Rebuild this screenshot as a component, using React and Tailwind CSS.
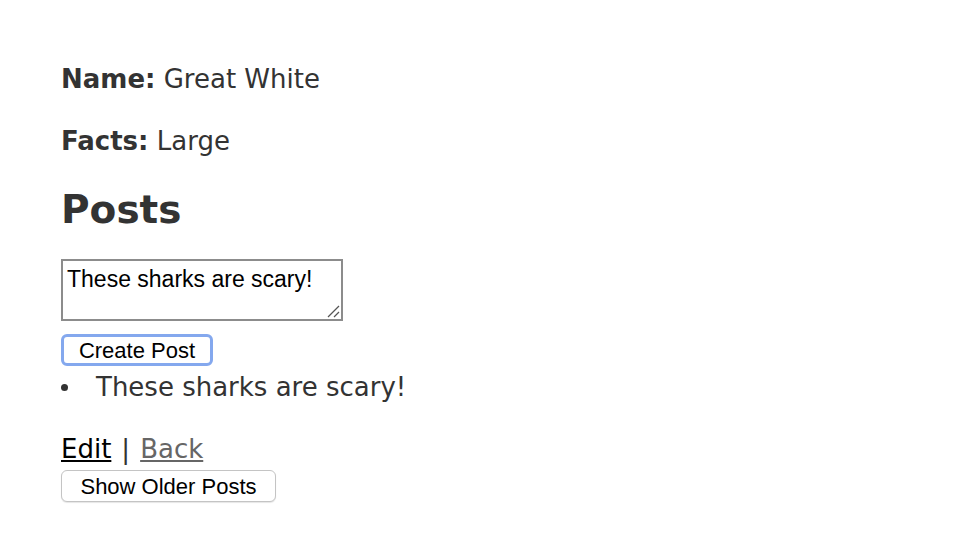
export default function App() {
  const body = { fontFamily: '"DejaVu Sans", Verdana, sans-serif' };
  const sys = { fontFamily: '"Liberation Sans", Arial, sans-serif' };
  return (
    <div className="min-h-[536px] w-[970px] bg-white pl-[61px] pt-[64px] text-[#333]" style={body}>
      <p className="text-[26px] leading-[30px]"><b>Name:</b> Great White</p>
      <p className="mt-[32px] text-[26px] leading-[30px]"><b>Facts:</b> Large</p>
      <h2 className="mt-[30px] text-[39px] font-bold leading-[48px]">Posts</h2>
      <div className="relative mt-[25px] h-[62px] w-[282px] border-2 border-[#8c8c8c] bg-white">
        <div className="px-[4px] pt-[4px] text-[23px] leading-[28px] text-black" style={sys}>These sharks are scary!</div>
        <svg className="absolute bottom-[1px] right-[1px]" width="14" height="14" viewBox="0 0 14 14">
          <line x1="2" y1="13" x2="13" y2="2" stroke="#555" strokeWidth="1.2" />
          <line x1="8" y1="13" x2="13" y2="8" stroke="#555" strokeWidth="1.2" />
        </svg>
      </div>
      <button className="mt-[13px] flex h-[32px] w-[152px] items-center justify-center rounded-[6px] border-[3px] border-[#84a8ee] bg-white text-[22px] text-black" style={sys}>Create Post</button>
      <ul className="mt-[6px]">
        <li className="flex items-center text-[26px] leading-[30px]">
          <span className="mr-[28px] inline-block h-[7px] w-[7px] rounded-full bg-[#333]"></span>
          These sharks are scary!
        </li>
      </ul>
      <div className="mt-[32px] flex items-center gap-[10px] text-[26px] leading-[30px]">
        <a className="text-black underline">Edit</a>
        <span>|</span>
        <a className="text-[#666] underline">Back</a>
      </div>
      <button className="mt-[6px] flex h-[32px] w-[215px] items-center justify-center rounded-[6px] border border-[#c4c4c4] bg-white text-[22px] text-black shadow-[0_1px_1px_rgba(0,0,0,0.1)]" style={sys}>Show Older Posts</button>
    </div>
  );
}
